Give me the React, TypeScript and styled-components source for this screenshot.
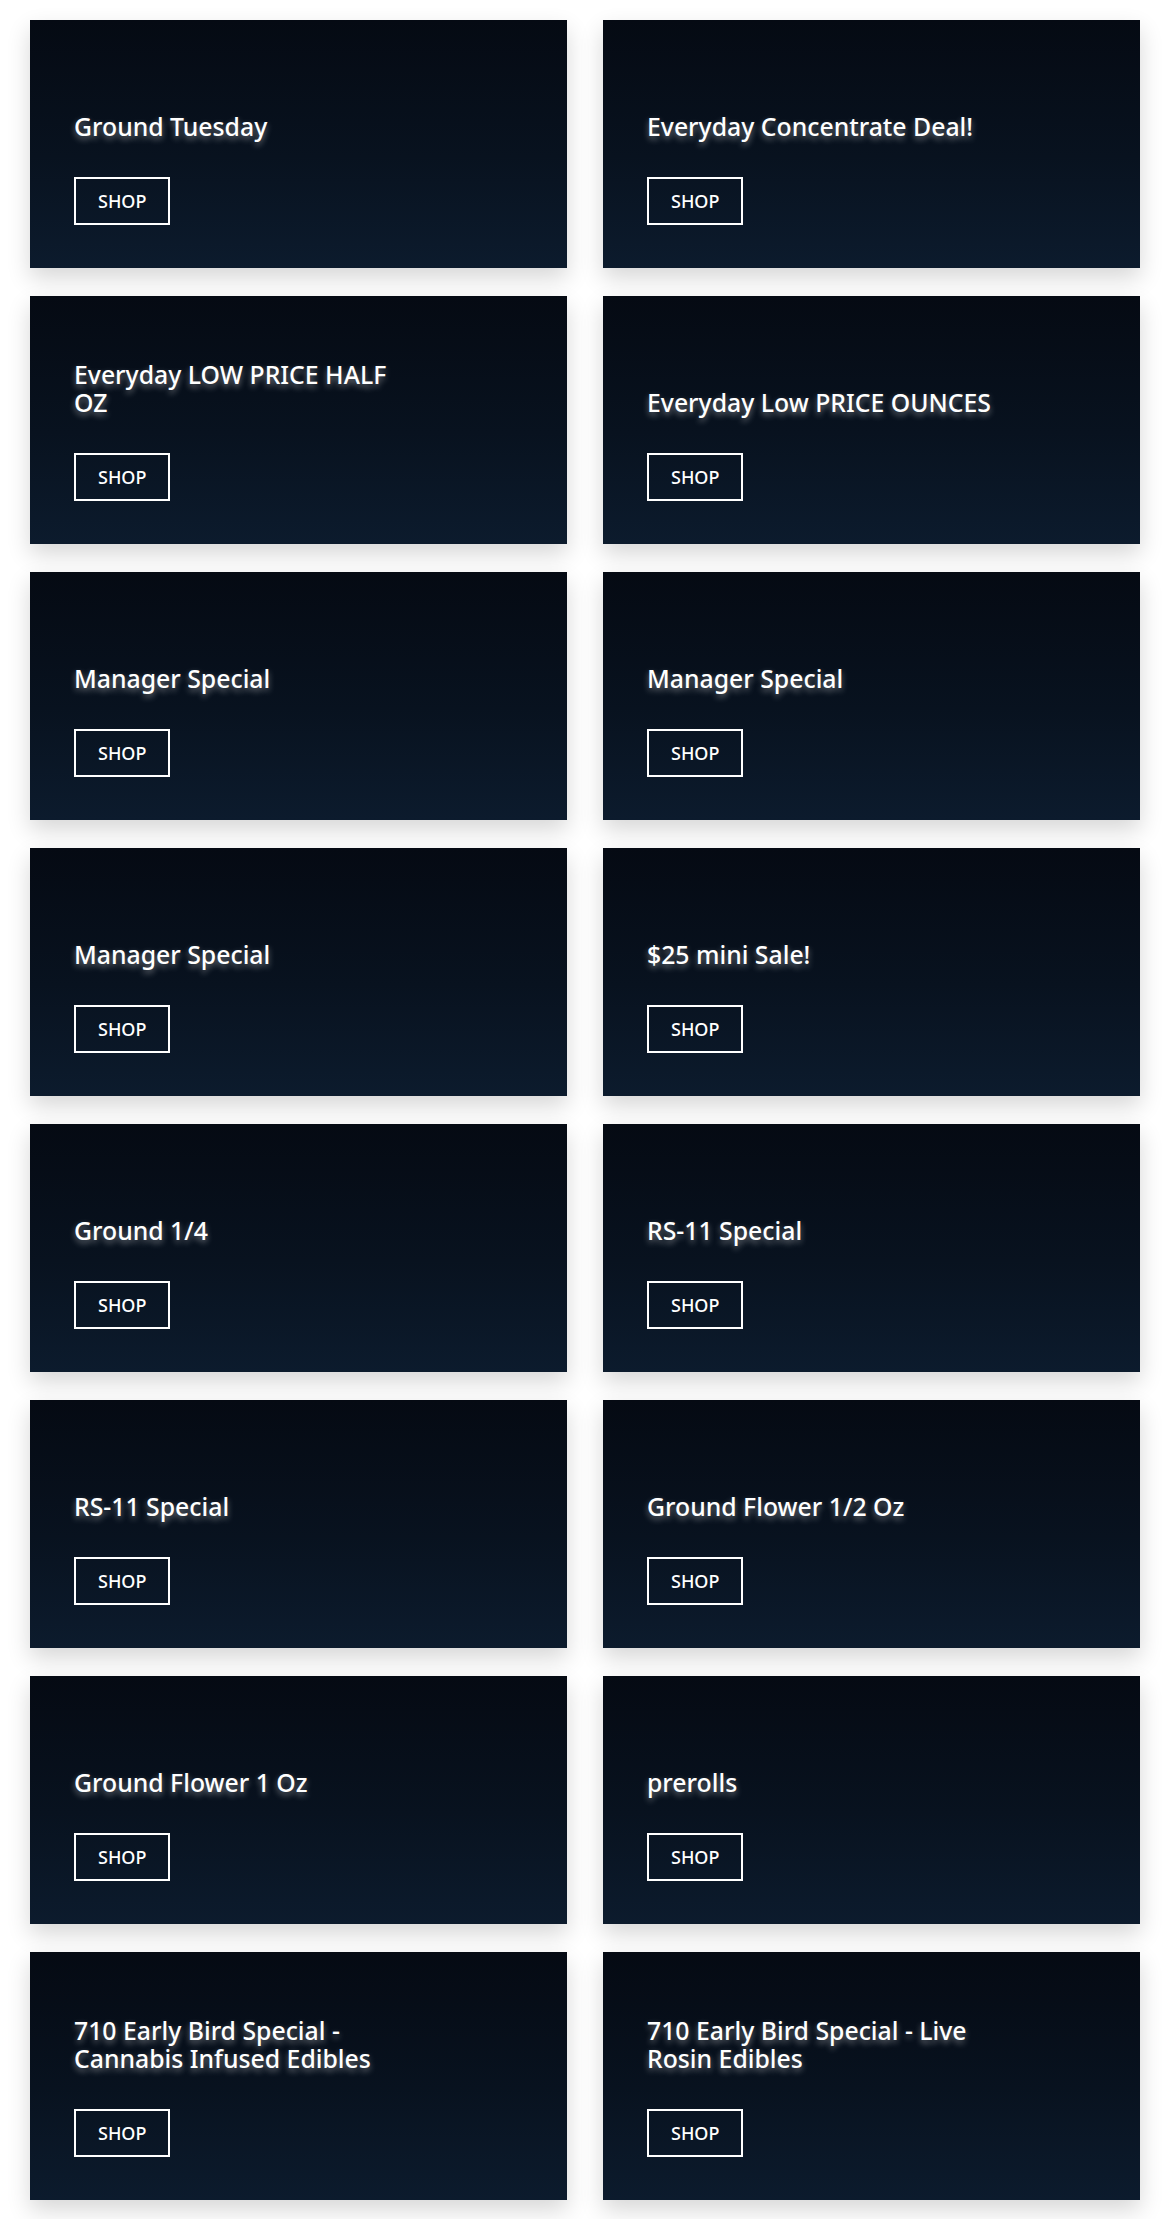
import styled, { createGlobalStyle } from "styled-components"

const deals = [
  "Ground Tuesday",
  "Everyday Concentrate Deal!",
  "Everyday LOW PRICE HALF OZ",
  "Everyday Low PRICE OUNCES",
  "Manager Special",
  "Manager Special",
  "Manager Special",
  "$25 mini Sale!",
  "Ground 1/4",
  "RS-11 Special",
  "RS-11 Special",
  "Ground Flower 1/2 Oz",
  "Ground Flower 1 Oz",
  "prerolls",
  "710 Early Bird Special - Cannabis Infused Edibles",
  "710 Early Bird Special - Live Rosin Edibles",
]

const App: React.FC = () => {
  return (
    <>
      <GlobalStyle />
      <Grid>
        {deals.map((title, i) => (
          <Card key={i}>
            <Title>{title}</Title>
            <ShopButton>SHOP</ShopButton>
          </Card>
        ))}
      </Grid>
    </>
  )
}

export default App

const GlobalStyle = createGlobalStyle`
  body {
    margin: 0;
    background: #fff;
    font-family: "Noto Sans", "Open Sans", sans-serif;
  }
`

const Grid = styled.div`
  display: grid;
  grid-template-columns: 1fr 1fr;
  column-gap: 36px;
  row-gap: 28px;
  padding: 20px 30px 19px;
`

const Card = styled.div`
  height: 248px;
  box-sizing: border-box;
  padding: 44px 44px 43px;
  display: flex;
  flex-direction: column;
  justify-content: flex-end;
  align-items: flex-start;
  gap: 37px;
  background: linear-gradient(180deg, #050a13 0%, #08121f 55%, #0c1b2d 100%);
  box-shadow: 0 10px 22px rgba(0, 0, 0, 0.16);
`

const Title = styled.div`
  max-width: 352px;
  font-size: 24.8px;
  line-height: 28px;
  font-weight: 500;
  color: #fff;
  text-shadow: 0 3px 6px rgba(255, 255, 255, 0.45);
`

const ShopButton = styled.button`
  box-sizing: border-box;
  height: 48px;
  padding: 0 22px;
  border: 2.5px solid #fff;
  background: transparent;
  color: #fff;
  font-family: "Noto Sans", sans-serif;
  font-size: 18px;
  font-weight: 500;
  cursor: pointer;
`
